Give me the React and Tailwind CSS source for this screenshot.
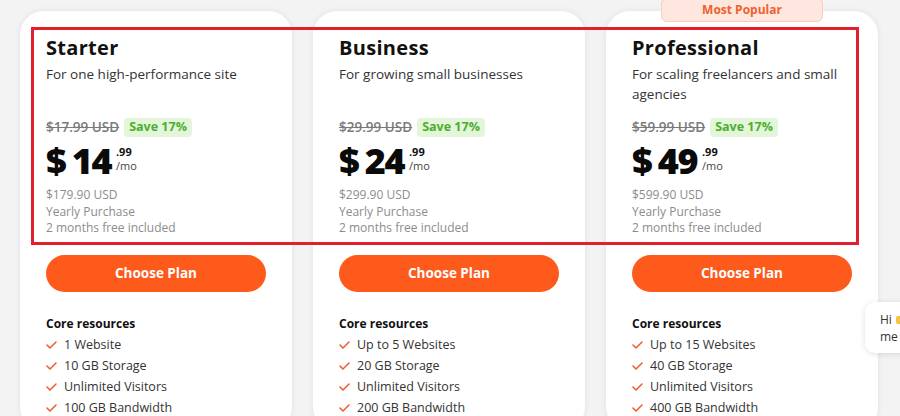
import React from "react";

const plans = [
  {
    name: "Starter",
    desc: "For one high-performance site",
    old: "$17.99 USD",
    price: "14",
    yearly: "$179.90 USD",
    items: ["1 Website", "10 GB Storage", "Unlimited Visitors", "100 GB Bandwidth"],
  },
  {
    name: "Business",
    desc: "For growing small businesses",
    old: "$29.99 USD",
    price: "24",
    yearly: "$299.90 USD",
    items: ["Up to 5 Websites", "20 GB Storage", "Unlimited Visitors", "200 GB Bandwidth"],
  },
  {
    name: "Professional",
    desc: "For scaling freelancers and small agencies",
    old: "$59.99 USD",
    price: "49",
    yearly: "$599.90 USD",
    items: ["Up to 15 Websites", "40 GB Storage", "Unlimited Visitors", "400 GB Bandwidth"],
    popular: true,
  },
];

function Check() {
  return (
    <svg width="11" height="8" viewBox="0 0 11 8" fill="none" className="shrink-0">
      <path d="M1 4l3 3 6-6" stroke="#f2592a" strokeWidth="1.5" strokeLinecap="round" strokeLinejoin="round" />
    </svg>
  );
}

function PlanCard({ plan }) {
  return (
    <div className="relative w-[272px] shrink-0 bg-white rounded-[24px] shadow-[0_0_6px_rgba(0,0,0,0.08)] px-[26px] pt-[25px] h-[420px]">
      {plan.popular && (
        <div className="absolute left-[55px] top-[-13px] w-[162px] h-[24px] rounded-[6px] bg-[#fde7de] border border-[#f8cdbb] flex items-center justify-center text-[12px] font-bold text-[#f0602d]">
          Most Popular
        </div>
      )}
      <div className="text-[20px] leading-[24px] font-bold text-[#111] tracking-[0.3px]">{plan.name}</div>
      <div className="mt-[4px] h-[40px] text-[13.5px] leading-[20px] text-[#333]">{plan.desc}</div>
      <div className="mt-[14px] flex items-center gap-[5px] h-[18px]">
        <span className="text-[13.5px] font-semibold text-[#7a7a7a] line-through">{plan.old}</span>
        <span className="h-[19px] px-[5px] rounded-[4px] bg-[#e3f6da] text-[#4caf2f] text-[12.5px] font-bold flex items-center">
          Save 17%
        </span>
      </div>
      <div className="mt-[5px] flex items-start h-[40px]">
        <span className="text-[36px] leading-[40px] font-extrabold text-[#0a0a0a]">$</span>
        <span className="ml-[5px] text-[36px] leading-[40px] font-extrabold text-[#0a0a0a] tracking-[-1.5px]">
          {plan.price}
        </span>
        <div className="ml-[5px] mt-[4px] flex flex-col">
          <span className="text-[11px] leading-[14px] font-bold text-[#111]">.99</span>
          <span className="text-[11px] leading-[14px] text-[#444]">/mo</span>
        </div>
      </div>
      <div className="mt-[6px] text-[12px] leading-[16.5px] text-[#8c8c8c]">
        <div>{plan.yearly}</div>
        <div>Yearly Purchase</div>
        <div>2 months free included</div>
      </div>
      <button className="mt-[18px] w-full h-[37px] rounded-full bg-[#fd5a1c] text-white text-[13.5px] font-bold">
        Choose Plan
      </button>
      <div className="mt-[23px] text-[12px] leading-[18px] font-bold text-[#111]">Core resources</div>
      <ul className="mt-[2px]">
        {plan.items.map((it) => (
          <li key={it} className="flex items-center gap-[7px] h-[21px] text-[12.5px] text-[#333]">
            <Check />
            <span>{it}</span>
          </li>
        ))}
      </ul>
    </div>
  );
}

export default function App() {
  return (
    <div
      className="relative w-[900px] h-[416px] overflow-hidden bg-[#f3f3f3]"
      style={{ fontFamily: '"Open Sans", "Liberation Sans", sans-serif' }}
    >
      <div className="flex gap-[21px] pl-[20px] pt-[11px]">
        {plans.map((p) => (
          <PlanCard key={p.name} plan={p} />
        ))}
      </div>
      <div className="absolute left-[31px] top-[27px] w-[828px] h-[218px] border-[3px] border-[#e21f2c]" />
      <div className="absolute left-[865px] top-[302px] w-[70px] h-[51px] rounded-[10px] bg-white shadow-[0_1px_6px_rgba(0,0,0,0.12)] pl-[15px] pt-[9px] text-[12px] leading-[17px] text-[#333]">
        <div className="flex items-center gap-[4px]">
          Hi <span className="inline-block w-[6px] h-[8px] rounded-[2px] bg-[#f4c542]" />
        </div>
        <div>me a</div>
      </div>
    </div>
  );
}
